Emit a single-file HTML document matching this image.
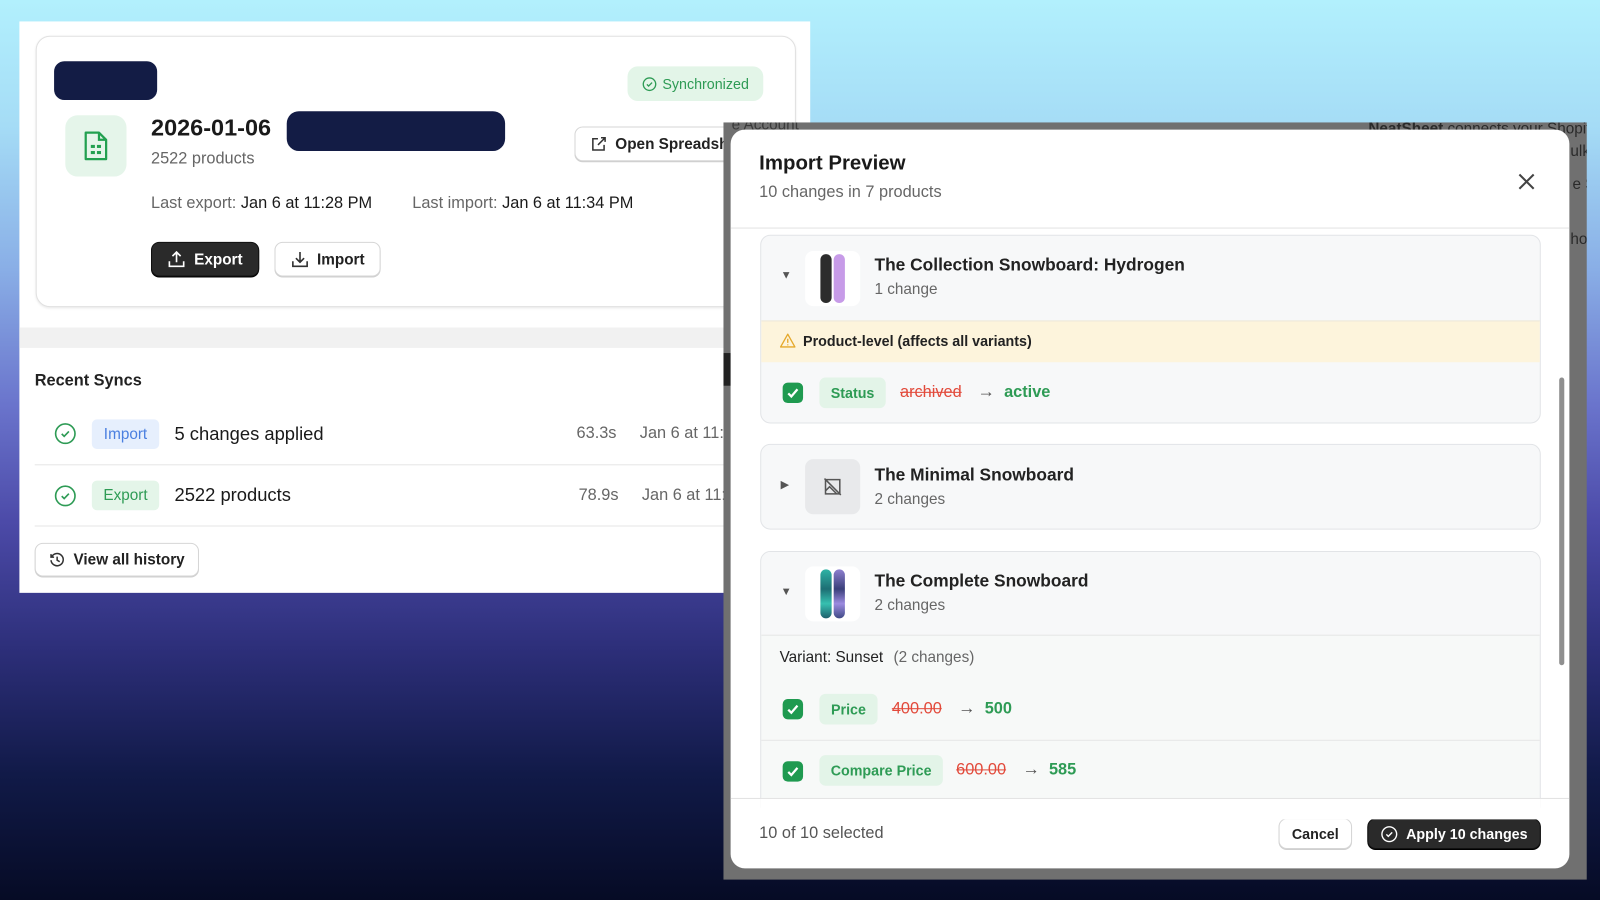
<!DOCTYPE html>
<html><head><meta charset="utf-8"><style>
*{box-sizing:border-box;margin:0;padding:0}
html,body{width:1600px;height:900px;overflow:hidden}
body{font-family:"Liberation Sans",Arial,sans-serif;background:linear-gradient(180deg,#b2f0fd 0%,#a5dcf6 14%,#89aee6 30%,#6a74cc 45%,#4c4aa8 58%,#2d2f7a 72%,#111a48 86%,#060b25 100%);position:relative}
#w{position:absolute;left:0;top:0;width:1568px;height:882px;transform:scale(1.020408);transform-origin:0 0}
.a{position:absolute}
.t{position:absolute;white-space:nowrap}
.btn{position:absolute;border-radius:8px;display:flex;align-items:center;justify-content:center;gap:8px;font-size:15px;font-weight:600}
.wb{background:#fff;border:1px solid #d6d6d6;box-shadow:0 1px 0 #cfcfcf;color:#222}
.db{background:#2a2a2a;color:#fff;box-shadow:0 1px 0 #000;border:1px solid #111}
.card{position:absolute;left:745px;width:765px;border:1px solid #e2e4e7;border-radius:10px;background:#f7f8f9;overflow:hidden}
.thumb{position:absolute;left:43px;width:54px;height:54px;border-radius:8px;background:#fff}
.ct{font-size:17px;font-weight:600;color:#222;left:111px}
.cs{font-size:15px;color:#666;left:111px}
.cb{position:absolute;width:20px;height:20px;border-radius:5px;background:#1f9a50}
.bdg{position:absolute;background:#e3f4e8;color:#2e9b55;border-radius:6px;font-size:14px;font-weight:600;display:flex;align-items:center;justify-content:center;height:30px}
.old{color:#e24a3b;text-decoration:line-through;font-size:16px}
.new{color:#2e9b55;font-size:16px;font-weight:600}
</style></head><body><div id="w">

<!-- left panel -->
<div class="a" style="left:19px;top:21px;width:775px;height:560px;background:#fff"></div>
<div class="a" style="left:19px;top:321px;width:775px;height:20px;background:#f1f1f1"></div>
<div class="a" style="left:35px;top:35px;width:745px;height:266px;border:1px solid #e1e1e1;border-radius:14px;background:#fff;box-shadow:0 1px 2px rgba(0,0,0,.08)"></div>
<div class="a" style="left:53px;top:60px;width:101px;height:38px;border-radius:10px;background:#131c45"></div>
<div class="a" style="left:615px;top:65px;width:133px;height:34px;border-radius:10px;background:#e3f5e8;display:flex;align-items:center;justify-content:center;gap:5px;color:#2e9b55;font-size:14px">
<svg width="15" height="15" viewBox="0 0 16 16"><circle cx="8" cy="8" r="6.5" fill="none" stroke="#2e9b55" stroke-width="1.4"/><path d="M5.3 8.2l1.8 1.8 3.6-3.7" fill="none" stroke="#2e9b55" stroke-width="1.4"/></svg>Synchronized</div>
<div class="a" style="left:64px;top:113px;width:60px;height:60px;border-radius:12px;background:#e5f5ea;display:flex;align-items:center;justify-content:center">
<svg width="26" height="30" viewBox="0 0 26 30"><path d="M3 2h13l7 7v19H3z" fill="none" stroke="#22a050" stroke-width="2.2" stroke-linejoin="round"/><path d="M16 2v7h7" fill="none" stroke="#22a050" stroke-width="2.2"/><rect x="8" y="14" width="4" height="3" fill="#22a050"/><rect x="14" y="14" width="4" height="3" fill="#22a050"/><rect x="8" y="20" width="4" height="3" fill="#22a050"/><rect x="14" y="20" width="4" height="3" fill="#22a050"/></svg></div>
<div class="t" style="left:148px;top:112px;font-size:23px;font-weight:700;color:#1a1a1a">2026-01-06</div>
<div class="a" style="left:281px;top:109px;width:214px;height:39px;border-radius:12px;background:#131c45"></div>
<div class="t" style="left:148px;top:147px;font-size:16px;color:#666">2522 products</div>
<div class="t" style="left:148px;top:191px;font-size:16px;color:#666">Last export: <span style="color:#1a1a1a">Jan 6 at 11:28 PM</span></div>
<div class="t" style="left:404px;top:191px;font-size:16px;color:#666">Last import: <span style="color:#1a1a1a">Jan 6 at 11:34 PM</span></div>
<div class="btn wb" style="left:563px;top:124px;width:180px;height:34px;justify-content:flex-start;padding-left:15px">
<svg width="16" height="16" viewBox="0 0 16 16" fill="none" stroke="#333" stroke-width="1.5"><path d="M13 9v5H2V3h5M10 2h4v4M14 2L7 9"/></svg>Open Spreadsheet</div>
<div class="btn db" style="left:148px;top:237px;width:106px;height:34px">
<svg width="18" height="18" viewBox="0 0 18 18" fill="none" stroke="#fff" stroke-width="1.6"><path d="M9 12V2M5 6l4-4 4 4M2 11v5h14v-5"/></svg>Export</div>
<div class="btn wb" style="left:269px;top:237px;width:104px;height:34px">
<svg width="18" height="18" viewBox="0 0 18 18" fill="none" stroke="#333" stroke-width="1.6"><path d="M9 2v10M5 8l4 4 4-4M2 11v5h14v-5"/></svg>Import</div>

<div class="t" style="left:34px;top:365px;font-size:16px;font-weight:600;color:#222">Recent Syncs</div>
<div class="a" style="left:34px;top:455px;width:700px;height:1px;background:#e6e6e6"></div>
<div class="a" style="left:34px;top:515px;width:700px;height:1px;background:#e6e6e6"></div>
<svg class="a" style="left:53px;top:414px" width="22" height="22" viewBox="0 0 22 22"><circle cx="11" cy="11" r="9.5" fill="none" stroke="#2e9b55" stroke-width="1.6"/><path d="M7.5 11.2l2.4 2.4 4.6-4.8" fill="none" stroke="#2e9b55" stroke-width="1.6"/></svg>
<svg class="a" style="left:53px;top:475px" width="22" height="22" viewBox="0 0 22 22"><circle cx="11" cy="11" r="9.5" fill="none" stroke="#2e9b55" stroke-width="1.6"/><path d="M7.5 11.2l2.4 2.4 4.6-4.8" fill="none" stroke="#2e9b55" stroke-width="1.6"/></svg>
<div class="a" style="left:90px;top:411px;width:66px;height:29px;border-radius:5px;background:#e6effd;color:#4a7fe0;font-size:15px;display:flex;align-items:center;justify-content:center">Import</div>
<div class="a" style="left:90px;top:471px;width:66px;height:29px;border-radius:5px;background:#e4f5e9;color:#2e9b55;font-size:15px;display:flex;align-items:center;justify-content:center">Export</div>
<div class="t" style="left:171px;top:415px;font-size:18px;color:#1a1a1a">5 changes applied</div>
<div class="t" style="left:171px;top:475px;font-size:18px;color:#1a1a1a">2522 products</div>
<div class="t" style="left:565px;top:416px;font-size:16px;color:#666">63.3s</div>
<div class="t" style="left:627px;top:416px;font-size:16px;color:#666">Jan 6 at 11:34 PM</div>
<div class="t" style="left:567px;top:477px;font-size:16px;color:#666">78.9s</div>
<div class="t" style="left:629px;top:477px;font-size:16px;color:#666">Jan 6 at 11:28 PM</div>
<div class="btn wb" style="left:34px;top:532px;width:161px;height:33px">
<svg width="16" height="16" viewBox="0 0 16 16" fill="none" stroke="#333" stroke-width="1.5"><path d="M2.5 5A6 6 0 1 1 2 8M2 2v3h3M8 4.5V8l2.5 1.5"/></svg>View all history</div>

<!-- overlay -->
<div class="a" style="left:709px;top:120px;width:846px;height:742px;background:#707070;overflow:hidden">
<div class="t" style="left:8px;top:-6px;font-size:15px;color:#3a3a3a">e Account</div>
<div class="t" style="left:632px;top:-2px;font-size:15px;color:#2a2a2a"><b>NeatSheet</b> connects your Shopify</div>
<div class="t" style="left:830px;top:20px;font-size:15px;color:#2a2a2a">ulk</div>
<div class="t" style="left:832px;top:52px;font-size:15px;color:#2a2a2a">e S</div>
<div class="t" style="left:830px;top:106px;font-size:15px;color:#2a2a2a">ho</div>
<div class="a" style="left:0;top:226px;width:12px;height:32px;background:#222"></div>
</div>

<!-- modal -->
<div class="a" style="left:716px;top:127px;width:822px;height:724px;background:#fff;border-radius:14px;overflow:hidden">
<div class="t" style="left:28px;top:22px;font-size:20px;font-weight:600;color:#1a1a1a">Import Preview</div>
<div class="t" style="left:28px;top:53px;font-size:16px;color:#666">10 changes in 7 products</div>
<svg class="a" style="left:771px;top:42px" width="18" height="18" viewBox="0 0 18 18" stroke="#444" stroke-width="2"><path d="M2 2l14 14M16 2L2 16"/></svg>
<div class="a" style="left:0;top:96px;width:822px;height:1px;background:#e3e3e3"></div>
<div class="a" style="left:0;top:655px;width:822px;height:1px;background:#e3e3e3"></div>
<div class="a" style="left:812px;top:243px;width:5px;height:282px;border-radius:3px;background:#8f8f8f"></div>
<div class="t" style="left:28px;top:681px;font-size:16px;color:#555">10 of 10 selected</div>
<div class="btn wb" style="left:537px;top:675px;width:72px;height:30px;font-size:14px">Cancel</div>
<div class="btn db" style="left:624px;top:675px;width:170px;height:30px;font-size:14px">
<svg width="17" height="17" viewBox="0 0 16 16"><circle cx="8" cy="8" r="6.8" fill="none" stroke="#fff" stroke-width="1.3"/><path d="M5.3 8.2l1.8 1.8 3.6-3.7" fill="none" stroke="#fff" stroke-width="1.3"/></svg>Apply 10 changes</div>
</div>

<!-- card 1 -->
<div class="card" style="top:230px;height:185px">
<div class="t" style="left:19px;top:33px;font-size:11px;color:#555">▼</div>
<div class="thumb" style="top:15px"><div class="a" style="left:15px;top:3px;width:11px;height:48px;border-radius:6px;background:#2c2c2c"></div><div class="a" style="left:28px;top:3px;width:11px;height:48px;border-radius:6px;background:#c79be8"></div></div>
<div class="t ct" style="top:19px">The Collection Snowboard: Hydrogen</div>
<div class="t cs" style="top:44px">1 change</div>
<div class="a" style="left:0;top:83px;width:765px;height:41px;background:#fdf4dc;border-top:1px solid #ece7da"></div>
<svg class="a" style="left:18px;top:95px" width="16" height="15" viewBox="0 0 16 15"><path d="M8 1.5L15 14H1z" fill="none" stroke="#e5a82a" stroke-width="1.3" stroke-linejoin="round"/><path d="M8 6v4M8 11.5v1" stroke="#e5a82a" stroke-width="1.3"/></svg>
<div class="t" style="left:41px;top:95px;font-size:14px;font-weight:600;color:#222">Product-level (affects all variants)</div>
<div class="cb" style="left:21px;top:144px"><svg width="20" height="20" viewBox="0 0 20 20"><path d="M5.5 10.5l3 3 6-7" fill="none" stroke="#fff" stroke-width="2.2"/></svg></div>
<div class="bdg" style="left:57px;top:139px;width:65px">Status</div>
<div class="t old" style="left:136px;top:145px">archived</div>
<div class="t" style="left:212px;top:143px;font-size:17px;color:#555">→</div>
<div class="t new" style="left:238px;top:145px">active</div>
</div>

<!-- card 2 -->
<div class="card" style="top:435px;height:84px">
<div class="t" style="left:19px;top:32px;font-size:11px;color:#555">▶</div>
<div class="thumb" style="top:14px;background:#e8e9eb"><svg class="a" style="left:17px;top:17px" width="20" height="20" viewBox="0 0 20 20" fill="none" stroke="#555" stroke-width="1.5"><path d="M3 3h14v14H3zM2 2l16 16M3 14l4-4 7 7"/></svg></div>
<div class="t ct" style="top:20px">The Minimal Snowboard</div>
<div class="t cs" style="top:45px">2 changes</div>
</div>

<!-- card 3 -->
<div class="card" style="top:540px;height:260px;background:#f7f9f8">
<div class="a" style="left:0;top:0;width:765px;height:82px;background:#f7f8f9;border-bottom:1px solid #e6e6e6"></div>
<div class="t" style="left:19px;top:33px;font-size:11px;color:#555">▼</div>
<div class="thumb" style="top:14px"><div class="a" style="left:15px;top:3px;width:11px;height:48px;border-radius:6px;background:linear-gradient(180deg,#2fb3a5,#1d6e74 40%,#36c0b0 70%,#1f5f6c)"></div><div class="a" style="left:28px;top:3px;width:11px;height:48px;border-radius:6px;background:linear-gradient(180deg,#8e80d0,#3a3f7a 40%,#9c8be0 70%,#3f4a85)"></div></div>
<div class="t ct" style="top:19px">The Complete Snowboard</div>
<div class="t cs" style="top:44px">2 changes</div>
<div class="t" style="left:18px;top:95px;font-size:15px;color:#222">Variant: Sunset <span style="color:#666;margin-left:6px">(2 changes)</span></div>
<div class="cb" style="left:21px;top:144px"><svg width="20" height="20" viewBox="0 0 20 20"><path d="M5.5 10.5l3 3 6-7" fill="none" stroke="#fff" stroke-width="2.2"/></svg></div>
<div class="bdg" style="left:57px;top:139px;width:57px">Price</div>
<div class="t old" style="left:128px;top:145px">400.00</div>
<div class="t" style="left:193px;top:143px;font-size:17px;color:#555">→</div>
<div class="t new" style="left:219px;top:145px">500</div>
<div class="a" style="left:0;top:184px;width:765px;height:1px;background:#e6e6e6"></div>
<div class="cb" style="left:21px;top:205px"><svg width="20" height="20" viewBox="0 0 20 20"><path d="M5.5 10.5l3 3 6-7" fill="none" stroke="#fff" stroke-width="2.2"/></svg></div>
<div class="bdg" style="left:57px;top:199px;width:121px">Compare Price</div>
<div class="t old" style="left:191px;top:205px">600.00</div>
<div class="t" style="left:256px;top:203px;font-size:17px;color:#555">→</div>
<div class="t new" style="left:282px;top:205px">585</div>
</div>
<div class="a" style="left:716px;top:782px;width:822px;height:1px;background:#e3e3e3"></div>
<div class="a" style="left:745px;top:783px;width:765px;height:20px;background:#fff"></div>

</div></body></html>
